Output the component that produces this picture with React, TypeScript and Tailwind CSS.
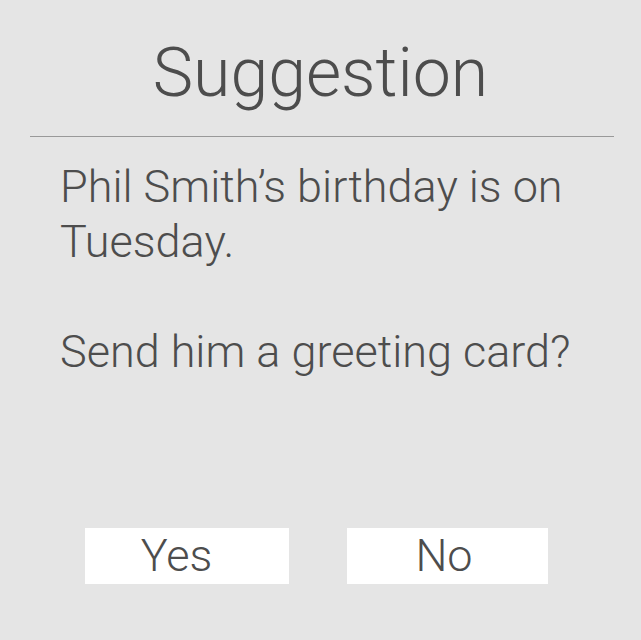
import React from "react";

const App: React.FC = () => {
    return (
        <div
            className="w-[641px] h-[640px] bg-[#e5e5e5] text-[#4d4d4d] flex flex-col"
            style={{ fontFamily: '"Helvetica Neue", Roboto, "Liberation Sans", sans-serif' }}
        >
            {/* Title */}
            <h1 className="h-[136px] pt-[33px] text-center text-[68px] leading-[80px] font-light">Suggestion</h1>
            <div className="ml-[30px] w-[584px] h-px bg-[#999999]" />

            {/* Message */}
            <div className="px-[60px] pt-[22px] text-[45px] leading-[55px] font-light">
                <p>Phil Smith’s birthday is on Tuesday.</p>
                <p className="mt-[55px]">Send him a greeting card?</p>
            </div>

            {/* Actions */}
            <div className="mt-auto mb-[56px] flex pl-[85px]">
                <button className="w-[204px] h-[56px] pr-[21px] bg-white text-[45px] leading-[56px] font-light">Yes</button>
                <button className="ml-[58px] w-[201px] h-[56px] pr-[7px] bg-white text-[45px] leading-[56px] font-light">No</button>
            </div>
        </div>
    );
};

export default App;
